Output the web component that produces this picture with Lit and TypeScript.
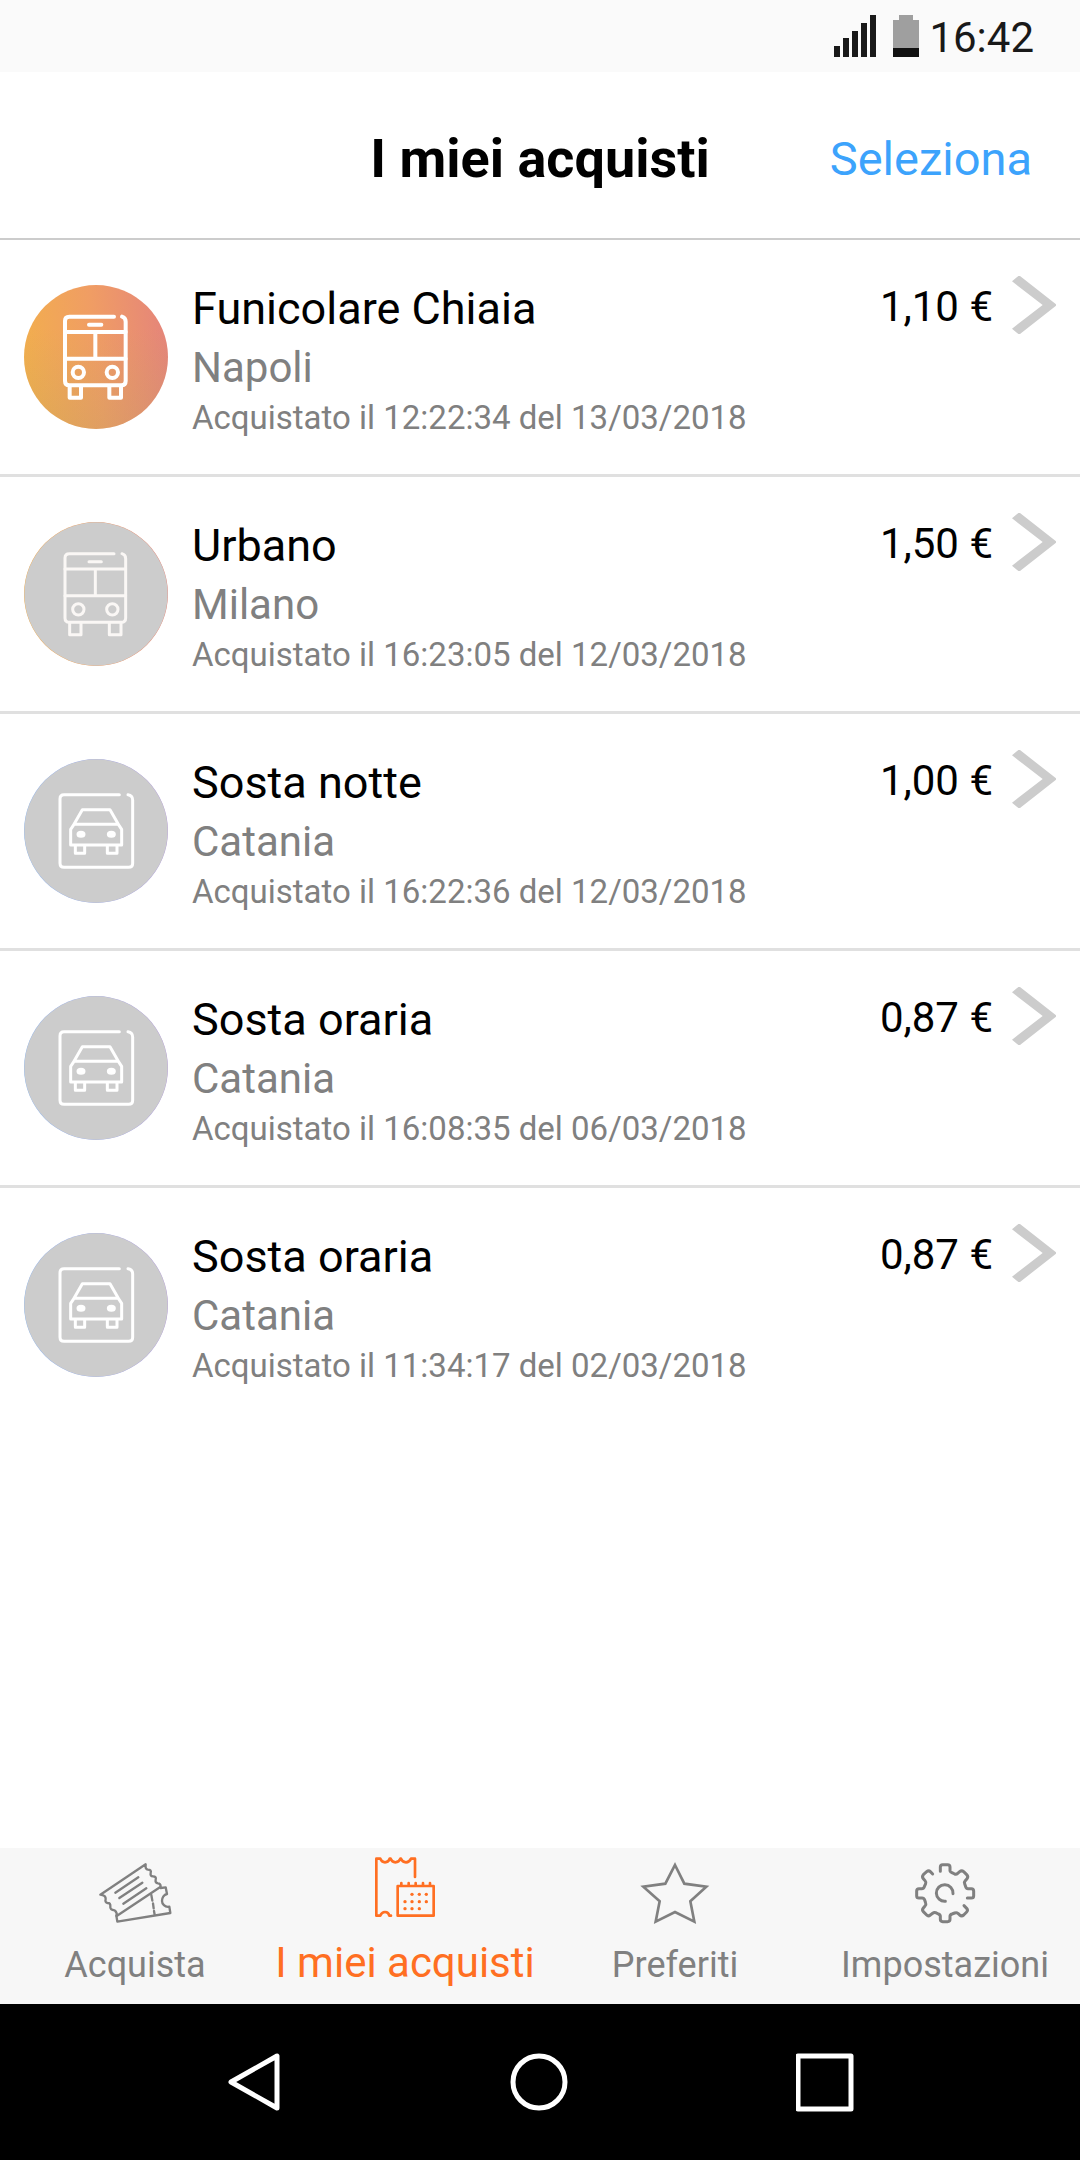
import { LitElement, html, svg, css } from "lit";
import { customElement, property, state } from "lit/decorators.js";
import { classMap } from "lit/directives/class-map.js";

type Kind = "bus" | "car";

interface Purchase {
  kind: Kind;
  active: boolean;
  title: string;
  city: string;
  date: string;
  price: string;
}

const purchases: Purchase[] = [
  { kind: "bus", active: true, title: "Funicolare Chiaia", city: "Napoli", date: "Acquistato il 12:22:34 del 13/03/2018", price: "1,10 €" },
  { kind: "bus", active: false, title: "Urbano", city: "Milano", date: "Acquistato il 16:23:05 del 12/03/2018", price: "1,50 €" },
  { kind: "car", active: false, title: "Sosta notte", city: "Catania", date: "Acquistato il 16:22:36 del 12/03/2018", price: "1,00 €" },
  { kind: "car", active: false, title: "Sosta oraria", city: "Catania", date: "Acquistato il 16:08:35 del 06/03/2018", price: "0,87 €" },
  { kind: "car", active: false, title: "Sosta oraria", city: "Catania", date: "Acquistato il 11:34:17 del 02/03/2018", price: "0,87 €" },
];

const busGlyph = svg`
  <path d="M342 260H208Q195 260 195 273V453Q195 466 208 466H364Q377 466 377 453V275Q377 263 366 260"/>
  <path d="M195 306H377M195 386H377M286 306V386M267 284H304"/>
  <circle cx="235" cy="427" r="17"/>
  <circle cx="337" cy="427" r="17"/>
  <path d="M209 468V503H243V468M328 468V503H363V468"/>`;

const carGlyph = svg`
  <path d="M358 272H192Q180 272 180 284V478Q180 490 192 490H386Q398 490 398 478V288Q398 274 384 272"/>
  <path d="M222 361L247 317H330L355 361M212 423V376L222 361H355L365 376V423Z"/>
  <path d="M226 425V448H254V425M322 425V448H351V425"/>
  <ellipse class="lamp" cx="243" cy="391" rx="9" ry="6"/>
  <ellipse class="lamp" cx="334" cy="391" rx="9" ry="6"/>`;

/* Round badge that shows the kind of ticket, in colour while it is valid. */
@customElement("ticket-badge")
export class TicketBadge extends LitElement {
  @property() kind: Kind = "bus";
  @property({ type: Boolean }) active = false;

  static styles = css`
    :host { display: block; }
    svg { display: block; width: 144px; height: 144px; }
    .glyph { fill: none; stroke: #fff; stroke-width: 9; stroke-linecap: round; stroke-linejoin: round; }
    .glyph.active { stroke-width: 12; }
    .glyph.spent-bus { stroke: #faf7f5; }
    .lamp { fill: #fff; }
    .spent { fill: #ccc; }
  `;

  render() {
    const warm = this.kind === "bus";
    return html`<svg viewBox="72 165 432 432" aria-hidden="true">
      <defs>
        <linearGradient id="fill" x1="0" y1="0.5" x2="1" y2="0.4">
          <stop offset="0" stop-color=${warm ? "#f2ae4e" : "#8fb8f0"}></stop>
          <stop offset="0.5" stop-color=${warm ? "#f09d64" : "#a3aee8"}></stop>
          <stop offset="1" stop-color=${warm ? "#e5857a" : "#b49bd8"}></stop>
        </linearGradient>
        <linearGradient id="shade" x1="0.5" y1="0" x2="0.5" y2="1">
          <stop offset="0.3" stop-color="#b0a060" stop-opacity="0"></stop>
          <stop offset="1" stop-color="#b0a060" stop-opacity="0.25"></stop>
        </linearGradient>
      </defs>
      <circle cx="288" cy="381" r="216" fill="url(#fill)"></circle>
      ${this.active
        ? svg`<circle cx="288" cy="381" r="216" fill="url(#shade)"/>`
        : svg`<circle class="spent" cx="288" cy="381" r="215"/>`}
      <g class=${classMap({ glyph: true, active: this.active, "spent-bus": warm && !this.active })}>
        ${this.kind === "bus" ? busGlyph : carGlyph}
      </g>
    </svg>`;
  }
}

@customElement("purchase-row")
export class PurchaseRow extends LitElement {
  @property({ attribute: false }) item!: Purchase;

  static styles = css`
    :host { display: block; }
    .row {
      display: grid;
      grid-template-columns: auto 1fr auto;
      column-gap: 24px;
      align-items: start;
      height: 234px;
      box-sizing: border-box;
      padding: 0 24px;
      color: inherit;
      text-decoration: none;
    }
    .badge { align-self: center; }
    .text { display: flex; flex-direction: column; padding-top: 41px; min-width: 0; }
    .title { font-size: 45px; line-height: 56px; color: #000; }
    .city { font-size: 42px; line-height: 62px; color: #808080; }
    .date { font-size: 33px; line-height: 38px; color: #808080; }
    .side { display: flex; align-items: flex-start; gap: 19px; padding-top: 36px; }
    .price { font-size: 42px; line-height: 62px; color: #000; }
    .chevron { display: block; width: 44px; height: 60px; fill: #ccc; }
  `;

  render() {
    const { kind, active, title, city, date, price } = this.item;
    return html`<a class="row" href="#">
      <ticket-badge class="badge" .kind=${kind} .active=${active}></ticket-badge>
      <span class="text">
        <span class="title">${title}</span>
        <span class="city">${city}</span>
        <span class="date">${date}</span>
      </span>
      <span class="side">
        <span class="price">${price}</span>
        <svg class="chevron" viewBox="516 138 132 180" aria-hidden="true">
          <path d="M516 154L535 138H540L648 223V227L540 312H535L516 296L608 225Z"></path>
        </svg>
      </span>
    </a>`;
  }
}

interface Tab {
  id: string;
  label: string;
  viewBox: string;
  icon: unknown;
}

const tabs: Tab[] = [
  {
    id: "buy",
    label: "Acquista",
    viewBox: "177 68 216 180",
    icon: svg`<g class="thin">
      <path d="M181 163L317 72Q315 87 324 88Q335 88 332 98Q330 108 339 108Q350 108 347 118Q345 128 354 129Q362 129 362 139L230 227Q232 216 224 210Q209 209 211 198Q212 188 203 188Q194 186 197 176Q198 165 181 163Z"/>
      <path d="M226 157L295 111M238 173L307 127M250 190L319 144"/>
      <path d="M229 226L232 244L391 218L388 199C374 202 366 190 366 182C366 172 372 163 381 161L377 141L362 143"/>
      <path d="M334 164L337 181M339 189L341 204M342 212L344 223"/></g>`,
  },
  {
    id: "mine",
    label: "I miei acquisti",
    viewBox: "327 50 216 180",
    icon: svg`
      <path d="M465 110V55H453Q448 66 438 66Q427 66 423 55H421Q417 66 406 66Q396 66 392 55H389Q386 66 375 66Q365 66 361 55H349V226H361Q365 215 375 215Q386 215 388 226H393"/>
      <path d="M413 137H521V226H413ZM424 128V137M446 128V137M467 128V137M489 128V137M510 128V137"/>
      <g class="dots"><circle cx="456" cy="162" r="5"/><circle cx="478" cy="162" r="5"/><circle cx="499" cy="162" r="5"/>
      <circle cx="435" cy="184" r="5"/><circle cx="456" cy="184" r="5"/><circle cx="478" cy="184" r="5"/><circle cx="499" cy="184" r="5"/>
      <circle cx="435" cy="205" r="5"/><circle cx="456" cy="205" r="5"/><circle cx="478" cy="205" r="5"/></g>`,
  },
  {
    id: "favourites",
    label: "Preferiti",
    viewBox: "177 68 216 180",
    icon: svg`<path class="star" d="M285 74L313 130L379 139L331 183L343 244L285 215L227 244L239 183L190 139L256 130Z"/>`,
  },
  {
    id: "settings",
    label: "Impostazioni",
    viewBox: "267 68 216 180",
    icon: svg`<g class="thick">
      <path d="M361 93V80Q361 73 368 73H383Q390 73 390 80V92Q391 96 396 97L404 101Q409 103 413 99L419 94Q425 89 431 94L440 103Q446 109 441 115L436 121Q432 125 434 130L437 139Q439 145 444 145H454Q461 145 461 152V167Q461 173 454 173H442"/>
      <path d="M432 196L440 204Q445 210 440 215L431 224Q425 229 419 224L414 219Q410 216 404 218L396 221Q390 223 390 228V237Q390 244 383 244H368Q361 244 361 237V228Q361 223 355 221L347 217Q342 215 338 219L331 224Q325 229 320 224L310 214Q305 209 310 203L315 197Q319 193 317 188L314 179Q312 173 306 173H297Q290 173 290 167V152Q290 145 297 145H305Q311 145 313 139L317 130Q319 126 315 121L310 115Q305 109 310 103L320 94Q326 89 331 94L338 101"/>
      <path d="M399 160A25 25 0 1 0 376 183"/></g>`,
  },
];

@customElement("app-root")
export class AppRoot extends LitElement {
  @state() private current = "mine";

  static styles = css`
    :host {
      display: flex;
      flex-direction: column;
      min-height: 100vh;
      background: #fff;
      font-family: Roboto, "Liberation Sans", sans-serif;
    }
    button { margin: 0; padding: 0; border: 0; background: none; font: inherit; cursor: pointer; }
    .status {
      display: flex;
      align-items: center;
      justify-content: flex-end;
      height: 72px;
      padding-right: 46px;
      background: #fafafa;
      color: #191919;
    }
    .signal { width: 42px; height: 42px; margin-right: 17px; fill: #191919; }
    .battery { width: 26px; height: 42px; margin-right: 10px; fill: #9f9f9f; }
    .charge { fill: #111; }
    .time { font-size: 42px; line-height: 48px; padding-top: 3px; }
    .header {
      display: grid;
      grid-template-columns: 1fr auto 1fr;
      align-items: center;
      height: 166px;
      padding: 7px 48px 0;
      box-sizing: border-box;
    }
    .heading { grid-column: 2; margin: 0; font-size: 54px; line-height: 64px; font-weight: 700; color: #000; }
    .header .select { justify-self: end; font-size: 47px; line-height: 64px; color: #3ca3fc; }
    .content { flex: 1; border-top: 2px solid #ccc; }
    .list { margin: 0; padding: 0; list-style: none; }
    .entry + .entry { border-top: 3px solid #e0e0e0; }
    .tabs { display: grid; grid-template-columns: repeat(4, 1fr); height: 156px; background: #f7f7f7; }
    .tabs .tab {
      display: flex;
      flex-direction: column;
      align-items: center;
      gap: 18px;
      padding-top: 15px;
      font-size: 36px;
      line-height: 48px;
      color: #808080;
      white-space: nowrap;
    }
    .tabs .tab.current { gap: 22px; padding-top: 9px; font-size: 42px; color: #ff6f22; }
    .icon {
      width: 72px;
      height: 60px;
      fill: none;
      stroke: currentColor;
      stroke-width: 8;
      stroke-linecap: round;
      stroke-linejoin: round;
      overflow: visible;
    }
    .thin { stroke-width: 7; }
    .thick { stroke-width: 9; }
    .star { stroke-width: 8; stroke-linejoin: miter; }
    .dots { fill: currentColor; stroke: none; }
    .system { display: grid; grid-template-columns: repeat(3, 1fr); height: 156px; padding: 0 111px; background: #000; }
    .key { display: flex; align-items: center; justify-content: center; }
    .key svg { width: 60px; height: 60px; fill: none; stroke: #fff; stroke-width: 5; stroke-linejoin: round; }
  `;

  render() {
    return html`
      <div class="status">
        <svg class="signal" viewBox="0 0 42 42" aria-hidden="true">
          <path d="M0 31h6v11H0zM9 23h6v19H9zM18 16h6v26h-6zM27 8h6v34h-6zM36 0h6v42h-6z"></path>
        </svg>
        <svg class="battery" viewBox="0 0 26 42" aria-hidden="true">
          <path d="M6 0h14v5h6v28H0V5h6z"></path>
          <path class="charge" d="M0 33h26v9H0z"></path>
        </svg>
        <span class="time">16:42</span>
      </div>
      <header class="header">
        <h1 class="heading">I miei acquisti</h1>
        <button class="select" type="button">Seleziona</button>
      </header>
      <main class="content">
        <ul class="list">
          ${purchases.map((item) => html`<li class="entry"><purchase-row .item=${item}></purchase-row></li>`)}
        </ul>
      </main>
      <nav class="tabs">
        ${tabs.map(
          (tab) => html`<button
            type="button"
            class=${classMap({ tab: true, current: tab.id === this.current })}
            aria-current=${tab.id === this.current ? "page" : "false"}
            @click=${() => (this.current = tab.id)}
          >
            <svg class="icon" viewBox=${tab.viewBox} aria-hidden="true">${tab.icon}</svg>
            <span>${tab.label}</span>
          </button>`
        )}
      </nav>
      <div class="system">
        <button class="key" type="button" aria-label="Indietro">
          <svg viewBox="0 0 60 60"><path d="M7 30L53 4V56Z"></path></svg>
        </button>
        <button class="key" type="button" aria-label="Home">
          <svg viewBox="0 0 60 60"><circle cx="29" cy="30" r="26"></circle></svg>
        </button>
        <button class="key" type="button" aria-label="Recenti">
          <svg viewBox="0 0 60 60"><rect x="2" y="4" width="53" height="53"></rect></svg>
        </button>
      </div>
    `;
  }
}
